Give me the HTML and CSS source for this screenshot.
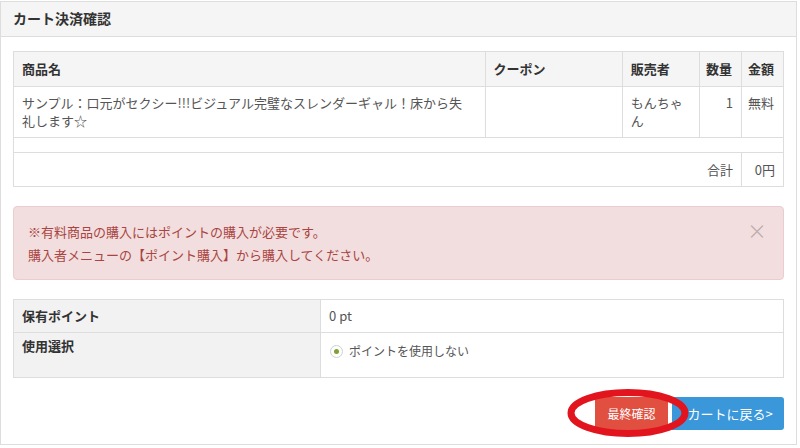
FILE: index.html
```html
<!DOCTYPE html>
<html lang="ja">
<head>
<meta charset="utf-8">
<title>カート決済確認</title>
<link rel="stylesheet" href="styles.css">
</head>
<body>
<div class="panel">
  <div class="panel-heading">カート決済確認</div>
  <div class="panel-body">
    <table class="cart">
      <colgroup>
        <col class="c-name"><col class="c-coupon"><col class="c-seller"><col class="c-qty"><col class="c-price">
      </colgroup>
      <thead>
        <tr><th>商品名</th><th>クーポン</th><th>販売者</th><th>数量</th><th>金額</th></tr>
      </thead>
      <tbody>
        <tr class="item">
          <td>サンプル：口元がセクシー!!!ビジュアル完璧なスレンダーギャル！床から失<br>礼します☆</td>
          <td></td>
          <td>もんちゃ<br>ん</td>
          <td class="num">1</td>
          <td class="num">無料</td>
        </tr>
        <tr class="spacer"><td colspan="5"></td></tr>
        <tr class="total">
          <td colspan="4" class="num">合計</td>
          <td class="num">0円</td>
        </tr>
      </tbody>
    </table>

    <div class="alert">
      <span class="close">×</span>
      <p>※有料商品の購入にはポイントの購入が必要です。</p>
      <p>購入者メニューの【ポイント購入】から購入してください。</p>
    </div>

    <table class="points">
      <tr class="have"><th>保有ポイント</th><td>0 pt</td></tr>
      <tr class="select"><th>使用選択</th><td><label class="radio"><span class="dot"></span>ポイントを使用しない</label></td></tr>
    </table>

    <div class="actions">
      <button class="btn btn-red">最終確認</button>
      <button class="btn btn-blue">カートに戻る&gt;</button>
      <svg class="ring" width="136" height="62" viewBox="0 0 136 62"><ellipse cx="68" cy="31" rx="57" ry="20.5" fill="none" stroke="#e2141d" stroke-width="7"/></svg>
    </div>
  </div>
</div>
</body>
</html>
```

FILE: styles.css
```css
* { box-sizing: border-box; }
html, body { margin: 0; padding: 0; background: #fff; }
body {
  font-family: "Noto Sans CJK JP", "Noto Sans", sans-serif;
  font-size: 13px;
  color: #555;
  padding-top: 1px;
}
.panel {
  width: 797px;
  border: 1px solid #dddddd;
}
.panel-heading {
  background: #f5f5f5;
  border-bottom: 1px solid #dddddd;
  padding: 0 12px;
  height: 35px;
  line-height: 33px;
  font-size: 14px;
  font-weight: bold;
  color: #333;
}
.panel-body {
  padding: 14px 12px 14px;
}
table {
  width: 100%;
  border-collapse: collapse;
  table-layout: fixed;
}
.cart { border: 1px solid #dddddd; }
.c-name { width: 471px; }
.c-coupon { width: 137px; }
.c-seller { width: 77px; }
.c-qty { width: 42px; }
.c-price { width: 42px; }
.cart th, .cart td {
  border: 1px solid #dddddd;
  padding: 0 8px;
  line-height: 18px;
  text-align: left;
  vertical-align: middle;
  white-space: nowrap;
}
.cart th {
  background: #f5f5f5;
  color: #333;
  font-weight: bold;
  height: 35px;
}
.cart th:nth-child(4), .cart th:nth-child(5) { padding-left: 6px; padding-right: 2px; }
.cart td:nth-child(5) { padding-left: 2px; padding-right: 9px; }
.cart td.num { text-align: right; }
.cart .item td { height: 51px; vertical-align: top; padding-top: 7px; }
.cart .spacer td { padding: 0; height: 15px; border-left: 0; border-right: 0; }
.cart .total td { height: 34px; }

.alert {
  margin-top: 19px;
  background: #f2dede;
  border: 1px solid #ebccd1;
  border-radius: 4px;
  color: #a94442;
  padding: 0 14px;
  height: 74px;
  display: flex;
  flex-direction: column;
  justify-content: center;
  position: relative;
  line-height: 23px;
}
.alert p { margin: 0; }
.close {
  position: absolute;
  right: 16px;
  top: 13px;
  font-size: 20px;
  line-height: 22px;
  color: rgba(0,0,0,0.22);
}

.points {
  margin-top: 19px;
  border: 1px solid #dddddd;
}
.points th, .points td {
  border: 1px solid #dddddd;
  padding: 0 8px;
  line-height: 18px;
  text-align: left;
}
.points th {
  width: 307px;
  background: #f2f2f2;
  color: #333;
  font-weight: bold;
}
.points .have th, .points .have td { height: 33px; vertical-align: middle; }
.points .select th, .points .select td { height: 45px; vertical-align: top; padding-top: 4px; }
.radio {
  display: flex;
  align-items: center;
  gap: 6px;
  font-size: 12px;
  color: #555;
  margin-top: 5px;
  margin-left: 1px;
}
.dot {
  width: 13px;
  height: 13px;
  border: 1px solid #cfcfcf;
  border-radius: 50%;
  background: #fff;
  display: flex;
  align-items: center;
  justify-content: center;
}
.dot::after {
  content: "";
  width: 5px;
  height: 5px;
  border-radius: 50%;
  background: #7fa134;
}

.actions {
  position: relative;
  margin-top: 19px;
  display: flex;
  justify-content: flex-end;
  gap: 4px;
}
.btn {
  border: 0;
  height: 33px;
  font-family: inherit;
  color: #fff;
  cursor: pointer;
}
.btn-red {
  width: 73px;
  background: #e04f3f;
  font-size: 12px;
}
.btn-blue {
  width: 112px;
  background: #3a97d9;
  font-size: 13px;
  border-radius: 0 3px 3px 0;
  padding-left: 10px;
}
.ring {
  position: absolute;
  right: 88px;
  top: -15px;
  pointer-events: none;
}
```
